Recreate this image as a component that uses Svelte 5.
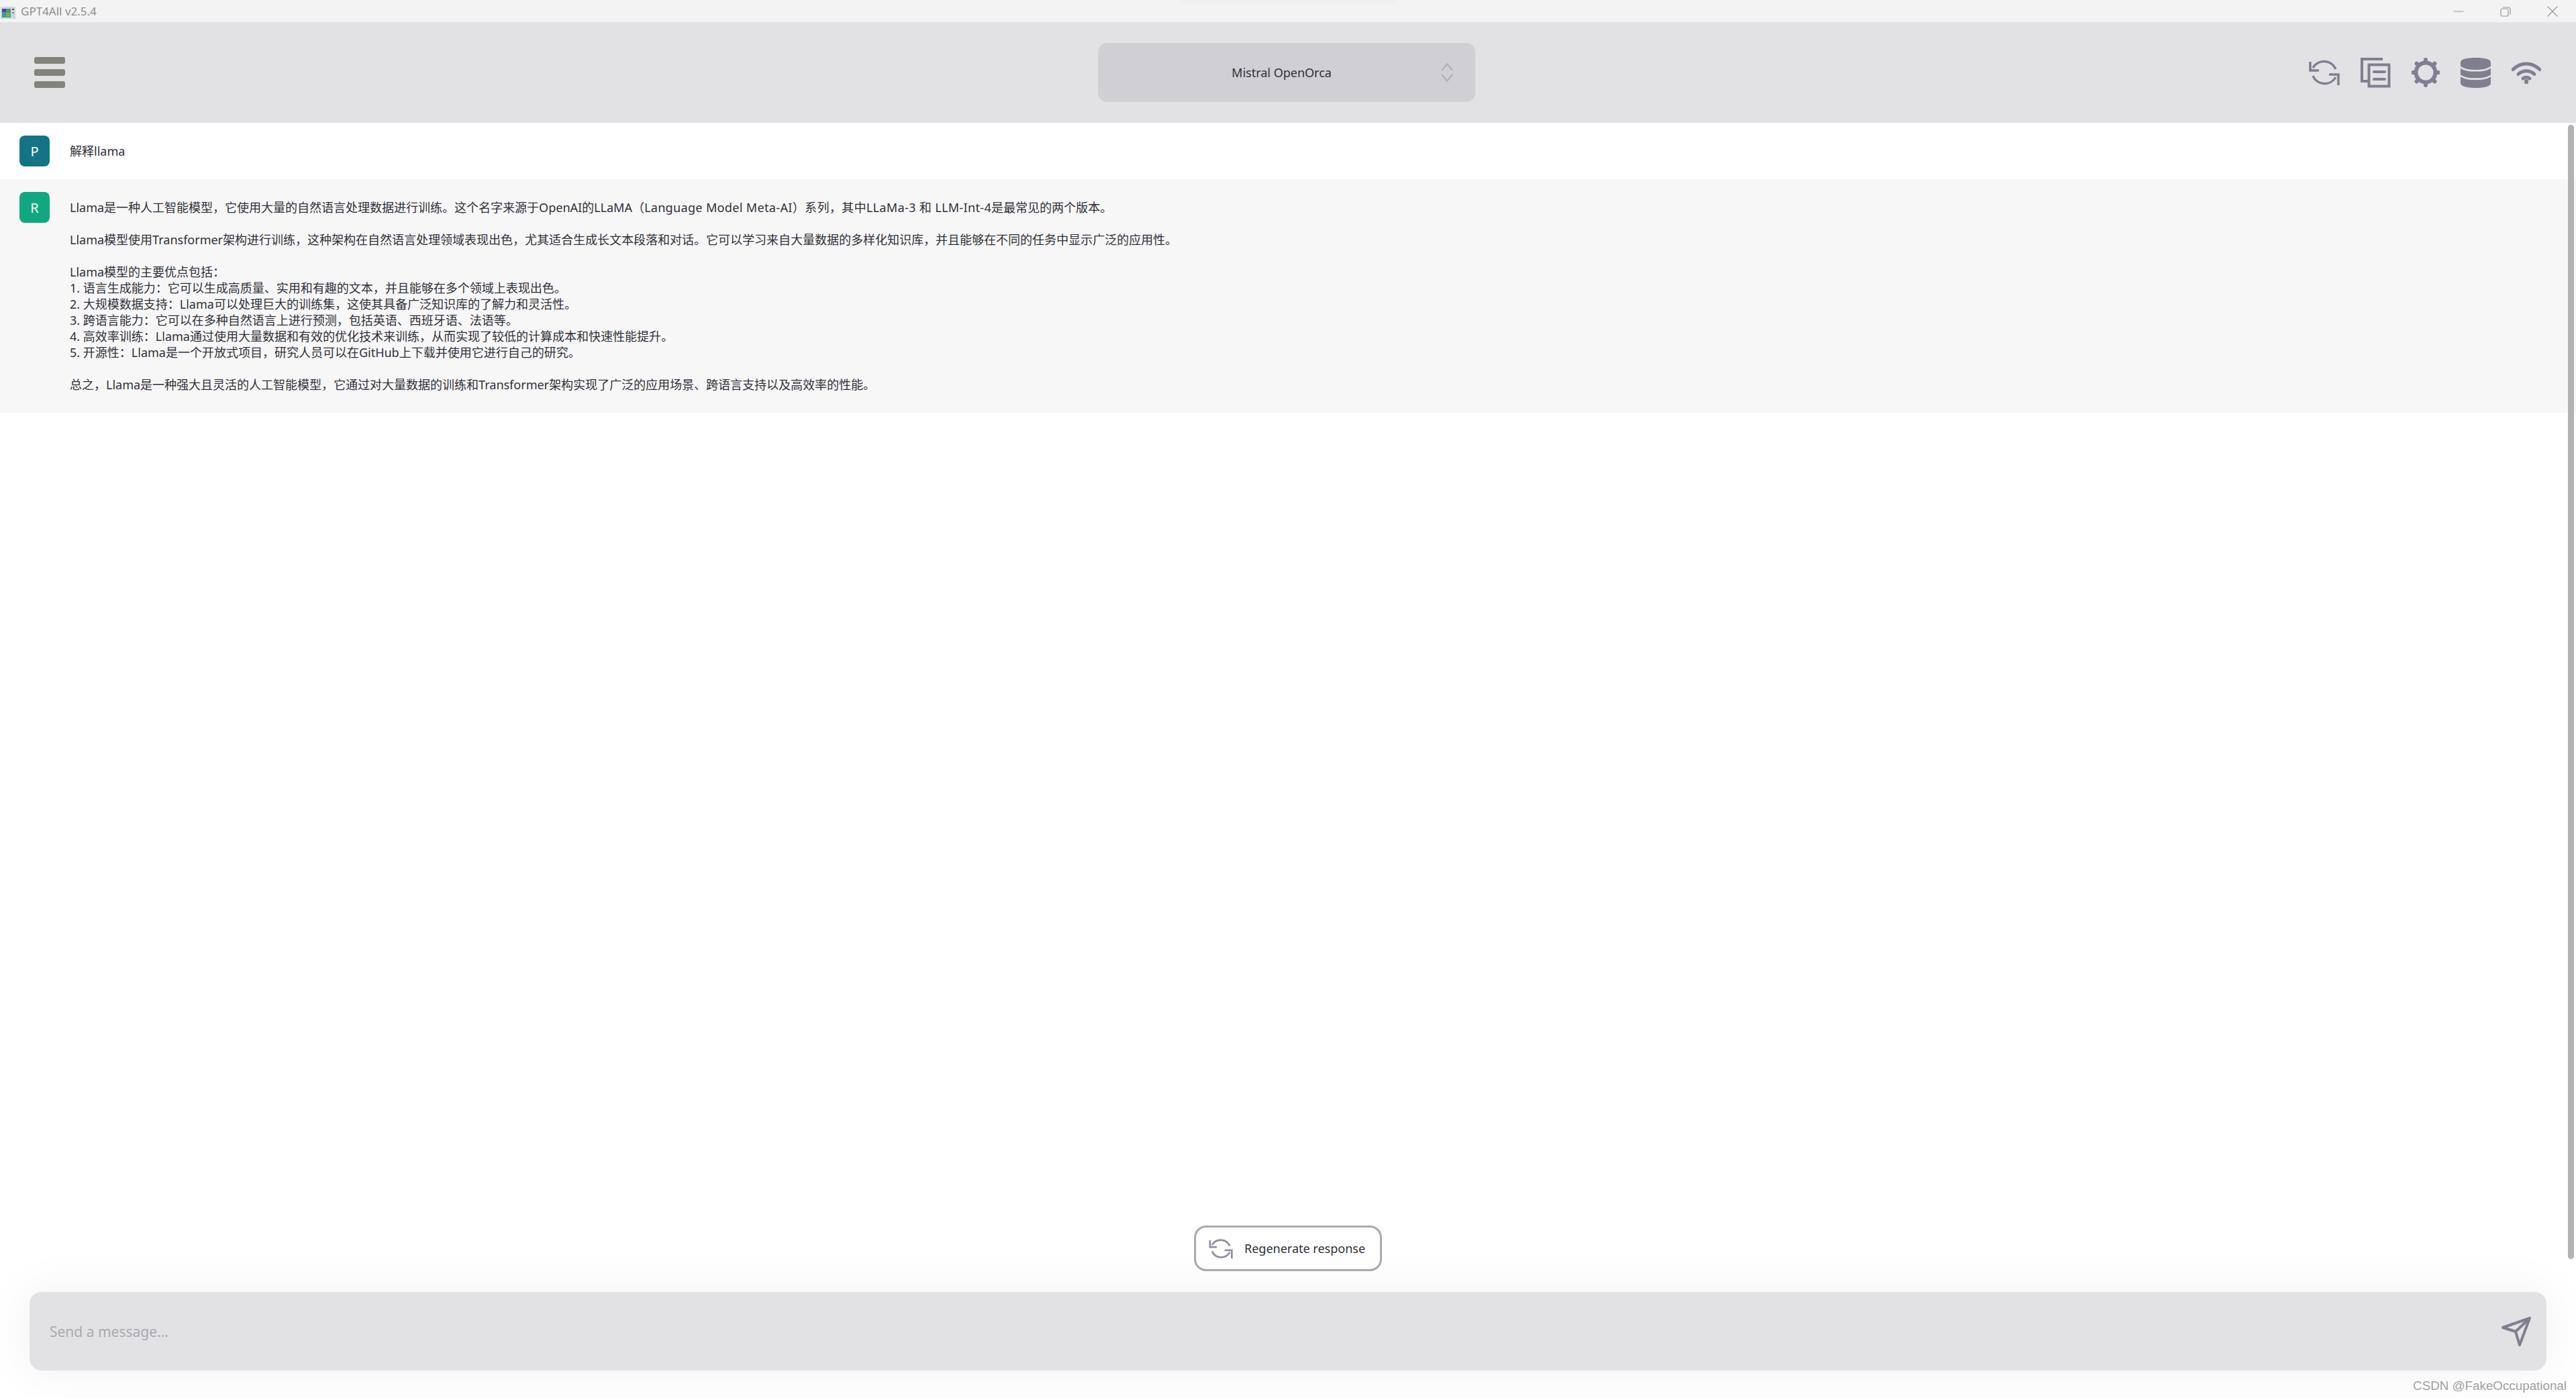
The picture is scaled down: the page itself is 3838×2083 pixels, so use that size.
<script>
const userText = '解释llama';
// english run of the first sentence sits a little wider than the fallback font
const head = 'Llama是一种人工智能模型，它使用大量的自然语言处理数据进行训练。这个名字来源于OpenAI的LLaMA（';
const wide = 'Language Model Meta-AI）系列，其中LLaMa-3 和 LLM-Int-4';
const tail = '是最常见的两个版本。';
const reply = `Llama模型使用Transformer架构进行训练，这种架构在自然语言处理领域表现出色，尤其适合生成长文本段落和对话。它可以学习来自大量数据的多样化知识库，并且能够在不同的任务中显示广泛的应用性。

Llama模型的主要优点包括：
1. 语言生成能力：它可以生成高质量、实用和有趣的文本，并且能够在多个领域上表现出色。
2. 大规模数据支持：Llama可以处理巨大的训练集，这使其具备广泛知识库的了解力和灵活性。
3. 跨语言能力：它可以在多种自然语言上进行预测，包括英语、西班牙语、法语等。
4. 高效率训练：Llama通过使用大量数据和有效的优化技术来训练，从而实现了较低的计算成本和快速性能提升。
5. 开源性：Llama是一个开放式项目，研究人员可以在GitHub上下载并使用它进行自己的研究。

总之，Llama是一种强大且灵活的人工智能模型，它通过对大量数据的训练和Transformer架构实现了广泛的应用场景、跨语言支持以及高效率的性能。`;
const teeth = [0, 45, 90, 135, 180, 225, 270, 315];
</script>

<div class="window">
  <div class="titlebar">
    <svg class="appicon" width="24" height="24" viewBox="0 0 24 24">
      <rect x="1" y="5" width="22" height="18" fill="#cfd6da" />
      <rect x="3" y="8" width="13" height="13" fill="#3f9a8c" />
      <rect x="3" y="8" width="6" height="5" fill="#5a3fb0" />
      <rect x="9" y="14" width="6" height="6" fill="#7fb040" />
      <rect x="18" y="8" width="3" height="2" fill="#555" />
      <rect x="18" y="13" width="3" height="2" fill="#888" />
    </svg>
    <span class="title">GPT4All v2.5.4</span>
    <div class="glow"></div>
    <div class="controls">
      <div class="ctl">
        <svg width="16" height="16" viewBox="0 0 16 16"><path d="M0.5 8h15" stroke="#999" stroke-width="1" /></svg>
      </div>
      <div class="ctl">
        <svg width="16" height="16" viewBox="0 0 16 16" fill="none" stroke="#999" stroke-width="1.2"><rect x="1" y="4" width="11" height="11" rx="2" /><path d="M4 2h8a3 3 0 0 1 3 3v8" /></svg>
      </div>
      <div class="ctl">
        <svg width="16" height="16" viewBox="0 0 16 16" fill="none" stroke="#999" stroke-width="1.2"><path d="M0.5 0.5l15 15M15.5 0.5l-15 15" /></svg>
      </div>
    </div>
  </div>

  <header class="toolbar">
    <div class="burger"><i></i><i></i><i></i></div>
    <div class="combo">
      <span>Mistral OpenOrca</span>
      <svg class="updown" width="18" height="28" viewBox="0 0 18 28" fill="none" stroke="#b2b1b7" stroke-width="2.5"><path d="M1 11L9 1.500L17 11M1 17L9 26.500L17 17" /></svg>
    </div>
    <div class="tools">
      <svg width="46" height="40" viewBox="0 0 46 40" fill="none" stroke="#807f90" stroke-width="3.500">
        <path d="M6 13A19 19 0 0 1 40 15M2 4V17H15" />
        <path d="M40 27A19 19 0 0 1 6 25M44 39V23H30" />
      </svg>
      <svg width="45" height="45" viewBox="0 0 45 45" fill="none" stroke="#807f90" stroke-width="4">
        <path d="M33 2H2V35H12" />
        <rect x="12.500" y="10.500" width="30" height="32" />
        <path d="M20 21H36M20 32H36" stroke-linecap="round" />
      </svg>
      <svg width="42" height="44" viewBox="0 0 42 44" fill="none" stroke="#807f90">
        <circle cx="21" cy="22" r="14.500" stroke-width="6" />
        {#each teeth as t}
          <path d="M21 4V3" stroke-width="6" stroke-linecap="round" transform="rotate({t} 21 22)" />
        {/each}
      </svg>
      <svg width="45" height="45" viewBox="0 0 46 46" fill="#807f90">
        <path d="M0 7C0 2 10 0 23 0S46 2 46 7V13C40 17 32 18.500 23 18.500S6 17 0 13Z" />
        <path d="M0 16C6 20 14 21 23 21S40 20 46 16V26C40 30 32 31 23 31S6 30 0 26Z" />
        <path d="M0 29C6 33 14 34 23 34S40 33 46 29V39C46 43 36 46 23 46S0 43 0 39Z" />
      </svg>
      <svg width="44" height="33" viewBox="0 0 44 33" fill="none" stroke="#807f90" stroke-width="5" stroke-linecap="round">
        <path d="M2 11.500C14 0 30 0 42 11.500" />
        <path d="M10 18.500C17 12 27 12 34 18.500" />
        <path d="M17 25C20 22.500 24 22.500 27 25" />
        <path d="M22 29V30.500" stroke-width="6" />
      </svg>
    </div>
  </header>

  <main class="chat">
    <div class="row">
      <div class="avatar user">P</div>
      <div class="msg">{userText}</div>
    </div>
    <div class="row answer">
      <div class="avatar bot">R</div>
      <div class="msg">
        <div class="first">{head}<span class="wide">{wide}</span>{tail}</div>
        <div class="rest">{reply}</div>
      </div>
    </div>
    <div class="scrollbar"></div>
  </main>

  <footer class="bottom">
    <button class="regen">
      <svg width="36" height="31" viewBox="0 0 46 40" fill="none" stroke="#8f8e9c" stroke-width="3.500">
        <path d="M6 13A19 19 0 0 1 40 15M2 4V17H15" />
        <path d="M40 27A19 19 0 0 1 6 25M44 39V23H30" />
      </svg>
      <span>Regenerate response</span>
    </button>
    <div class="input">
      <span class="placeholder">Send a message...</span>
      <svg width="44" height="44" viewBox="0 0 44 44" fill="none" stroke="#807f90" stroke-width="4" stroke-linejoin="round" stroke-linecap="round">
        <path d="M42 2L2 16L21 22L27 42ZM42 2L21 22" />
      </svg>
    </div>
    <div class="mark">CSDN @FakeOccupational</div>
  </footer>
</div>

<style>
:global(body) {
  margin: 0;
  background: #fff;
}
.window {
  display: flex;
  flex-direction: column;
  height: 2083px;
  overflow: hidden;
  font-family: "Noto Sans", "Noto Sans CJK SC", sans-serif;
  color: #2f2f38;
}
.titlebar {
  position: relative;
  display: flex;
  align-items: center;
  height: 33px;
  flex: none;
  background: #f3f3f3;
}
.appicon {
  flex: none;
}
.title {
  margin-left: 7px;
  font-size: 17px;
  color: #8d8d8d;
}
.glow {
  position: absolute;
  left: 1760px;
  top: -10px;
  width: 320px;
  height: 10px;
  box-shadow: 0 2px 8px rgba(0, 0, 0, 0.03);
}
.controls {
  display: flex;
  margin-left: auto;
}
.ctl {
  display: flex;
  align-items: center;
  justify-content: center;
  width: 70px;
  height: 33px;
}
.toolbar {
  display: grid;
  grid-template-columns: 1fr 562px 1fr;
  align-items: center;
  height: 150px;
  flex: none;
  padding: 0 52px 0 51px;
  box-sizing: border-box;
  background: #e2e2e5;
}
.burger {
  display: flex;
  flex-direction: column;
  gap: 8px;
  width: 46px;
}
.burger i {
  display: block;
  height: 10px;
  border-radius: 3px;
  background: #83827b;
}
.combo {
  position: relative;
  display: flex;
  align-items: center;
  justify-content: center;
  height: 88px;
  padding-right: 14px;
  border-radius: 14px;
  background: #d0cfd4;
  font-size: 18px;
  margin-left: -2px;
  margin-right: 2px;
}
.updown {
  position: absolute;
  right: 33px;
  top: 30px;
}
.tools {
  display: flex;
  align-items: center;
  justify-content: flex-end;
  gap: 31px;
}
.chat {
  position: relative;
  flex: 1;
  min-height: 0;
}
.row {
  display: flex;
  gap: 30px;
  padding: 19px 29px;
}
.row.answer {
  background: #f7f7f7;
  padding-bottom: 30px;
}
.avatar {
  display: flex;
  align-items: center;
  justify-content: center;
  flex: none;
  width: 45px;
  height: 46px;
  border-radius: 8px;
  color: #fff;
  font-size: 20px;
}
.avatar.user {
  background: #147486;
}
.avatar.bot {
  background: #10a97f;
}
.msg {
  font-size: 18px;
  line-height: 24px;
  padding-top: 11px;
}
.rest {
  margin-top: 24px;
  white-space: pre-line;
}
.wide {
  letter-spacing: 0.35px;
}
.scrollbar {
  position: absolute;
  top: 3px;
  right: 3px;
  width: 9px;
  height: 1690px;
  border-radius: 5px;
  background: #b3b3b3;
}
.bottom {
  position: relative;
  display: flex;
  flex-direction: column;
  align-items: center;
  flex: none;
  padding: 0 44px 41px;
}
.regen {
  display: flex;
  align-items: center;
  gap: 17px;
  width: 280px;
  height: 68px;
  padding: 0 0 0 19px;
  margin-bottom: 31px;
  box-sizing: border-box;
  border: 3px solid #aaa9b1;
  border-radius: 18px;
  background: #fff;
  font: inherit;
  font-size: 18px;
  color: #2f2f38;
  white-space: nowrap;
}
.input {
  display: flex;
  align-items: center;
  justify-content: space-between;
  align-self: stretch;
  height: 117px;
  padding: 0 23px 0 30px;
  border-radius: 18px;
  background: #e2e2e5;
  box-shadow: 0 0 56px 8px rgba(110, 110, 120, 0.07);
}
.placeholder {
  font-size: 21px;
  color: #a9a9b0;
}
.mark {
  position: absolute;
  right: 14px;
  bottom: 7px;
  font-family: "Liberation Sans", sans-serif;
  font-size: 18.800px;
  color: #a0a0a0;
}
</style>
